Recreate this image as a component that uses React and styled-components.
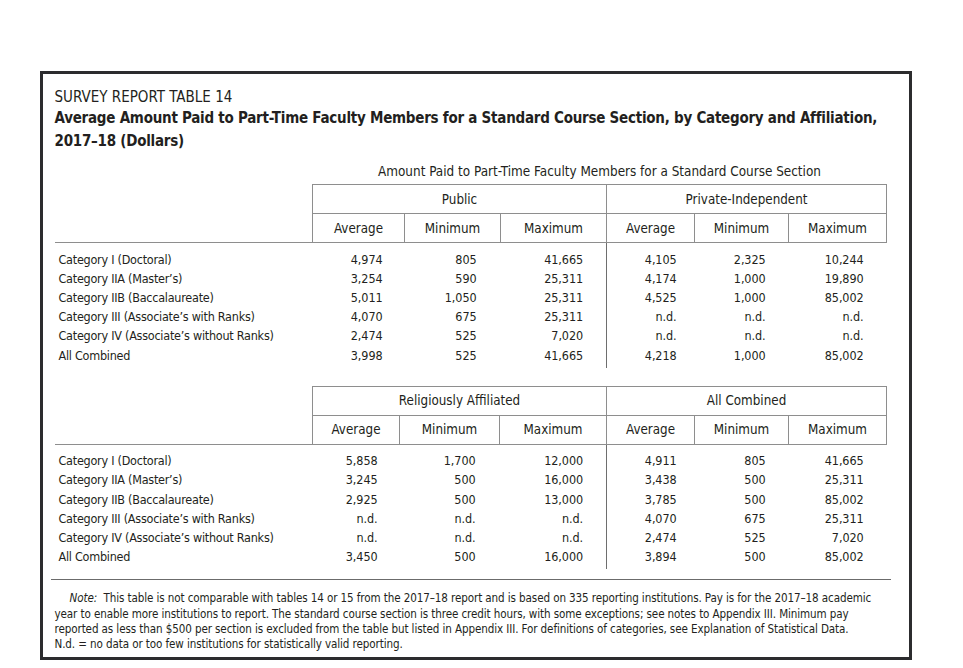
import styled, { createGlobalStyle } from "styled-components";

const GlobalStyle = createGlobalStyle`
  body {
    margin: 0;
    background: #ffffff;
    color: #231f20;
    font-family: "DejaVu Sans Condensed", "DejaVu Sans", sans-serif;
    font-stretch: condensed;
  }
`;

const Page = styled.div`
  padding: 71px 0 0 40px;
`;

const Frame = styled.section`
  box-sizing: border-box;
  width: 872px;
  height: 589px;
  border: 3.5px solid #2c2c2e;
  padding: 13px 0 0 11.5px;
`;

const Kicker = styled.div`
  font-size: 15px;
  line-height: 20px;
  white-space: nowrap;
`;

const Title = styled.h1`
  margin: 0;
  font-size: 15px;
  font-weight: bold;
  line-height: 23px;
  letter-spacing: -0.25px;
  white-space: nowrap;
`;

const Caption = styled.div`
  margin: 9px 0 2px 258px;
  width: 574px;
  text-align: center;
  font-size: 13.4px;
  line-height: 20px;
  white-space: nowrap;
`;

const DataTable = styled.table`
  border-collapse: collapse;
  table-layout: fixed;
  width: 832px;
  margin-top: ${(p) => p.$gap}px;
  font-size: 12.5px;
  white-space: nowrap;
`;

const Col = styled.col`
  width: ${(p) => p.$width}px;
`;

const BlankHead = styled.th`
  padding: 0;
  border-bottom: ${(p) => (p.$rule ? "1.5px solid #8e8e8e" : "none")};
`;

const HeadCell = styled.th`
  height: 28px;
  padding: 0;
  border: 1.5px solid #8e8e8e;
  font-size: 13.3px;
  font-weight: normal;
  text-align: center;
`;

const LabelCell = styled.td`
  padding: 0 0 0 4px;
  line-height: 19.2px;
  letter-spacing: -0.25px;
  text-align: left;
`;

const ValueCell = styled.td`
  padding: 0 ${(p) => p.$pad}px 0 0;
  line-height: 19.2px;
  letter-spacing: -0.1px;
  text-align: right;
  border-left: ${(p) => (p.$split ? "1.5px solid #6e6e6e" : "none")};
`;

const Body = styled.tbody`
  tr:first-child td {
    padding-top: 6.5px;
  }
  tr:last-child td {
    padding-bottom: 3px;
  }
`;

const Rule = styled.hr`
  margin: 10px 0 0 -4px;
  width: 840px;
  height: 0;
  border: none;
  border-top: 1.5px solid #6b6b6b;
`;

const Note = styled.p`
  margin: 11px 0 0;
  font-size: 11.55px;
  line-height: 15.2px;
  letter-spacing: -0.1px;
  white-space: nowrap;

  em {
    margin-left: 15px;
  }
`;

const CATEGORIES = [
  "Category I (Doctoral)",
  "Category IIA (Master\u2019s)",
  "Category IIB (Baccalaureate)",
  "Category III (Associate\u2019s with Ranks)",
  "Category IV (Associate\u2019s without Ranks)",
  "All Combined",
];

const PADS = [22, 24, 23, 18, 23, 23];

const BLOCKS = [
  {
    groups: ["Public", "Private-Independent"],
    widths: [92, 96, 106, 88, 94, 98],
    gap: 0,
    rows: [
      ["4,974", "805", "41,665", "4,105", "2,325", "10,244"],
      ["3,254", "590", "25,311", "4,174", "1,000", "19,890"],
      ["5,011", "1,050", "25,311", "4,525", "1,000", "85,002"],
      ["4,070", "675", "25,311", "n.d.", "n.d.", "n.d."],
      ["2,474", "525", "7,020", "n.d.", "n.d.", "n.d."],
      ["3,998", "525", "41,665", "4,218", "1,000", "85,002"],
    ],
  },
  {
    groups: ["Religiously Affiliated", "All Combined"],
    widths: [87, 100, 107, 88, 94, 98],
    gap: 18,
    rows: [
      ["5,858", "1,700", "12,000", "4,911", "805", "41,665"],
      ["3,245", "500", "16,000", "3,438", "500", "25,311"],
      ["2,925", "500", "13,000", "3,785", "500", "85,002"],
      ["n.d.", "n.d.", "n.d.", "4,070", "675", "25,311"],
      ["n.d.", "n.d.", "n.d.", "2,474", "525", "7,020"],
      ["3,450", "500", "16,000", "3,894", "500", "85,002"],
    ],
  },
];

const STATS = ["Average", "Minimum", "Maximum"];

function Block({ block }) {
  return (
    <DataTable $gap={block.gap}>
      <colgroup>
        <Col $width={258} />
        {block.widths.map((w, i) => (
          <Col key={i} $width={w} />
        ))}
      </colgroup>
      <thead>
        <tr>
          <BlankHead />
          {block.groups.map((g) => (
            <HeadCell key={g} colSpan={3}>
              {g}
            </HeadCell>
          ))}
        </tr>
        <tr>
          <BlankHead $rule />
          {[...STATS, ...STATS].map((s, i) => (
            <HeadCell key={i}>{s}</HeadCell>
          ))}
        </tr>
      </thead>
      <Body>
        {block.rows.map((row, r) => (
          <tr key={r}>
            <LabelCell>{CATEGORIES[r]}</LabelCell>
            {row.map((v, i) => (
              <ValueCell key={i} $pad={PADS[i]} $split={i === 3}>
                {v}
              </ValueCell>
            ))}
          </tr>
        ))}
      </Body>
    </DataTable>
  );
}

export default function App() {
  return (
    <Page>
      <GlobalStyle />
      <Frame>
        <Kicker>SURVEY REPORT TABLE 14</Kicker>
        <Title>
          Average Amount Paid to Part-Time Faculty Members for a Standard Course Section, by Category and Affiliation,
          <br />
          2017–18 (Dollars)
        </Title>
        <Caption>Amount Paid to Part-Time Faculty Members for a Standard Course Section</Caption>
        {BLOCKS.map((b, i) => (
          <Block key={i} block={b} />
        ))}
        <Rule />
        <Note>
          <em>Note:</em>&nbsp; This table is not comparable with tables 14 or 15 from the 2017–18 report and is based on 335 reporting institutions. Pay is for the 2017–18 academic
          <br />
          year to enable more institutions to report. The standard course section is three credit hours, with some exceptions; see notes to Appendix III. Minimum pay
          <br />
          reported as less than $500 per section is excluded from the table but listed in Appendix III. For definitions of categories, see Explanation of Statistical Data.
          <br />
          N.d. = no data or too few institutions for statistically valid reporting.
        </Note>
      </Frame>
    </Page>
  );
}
